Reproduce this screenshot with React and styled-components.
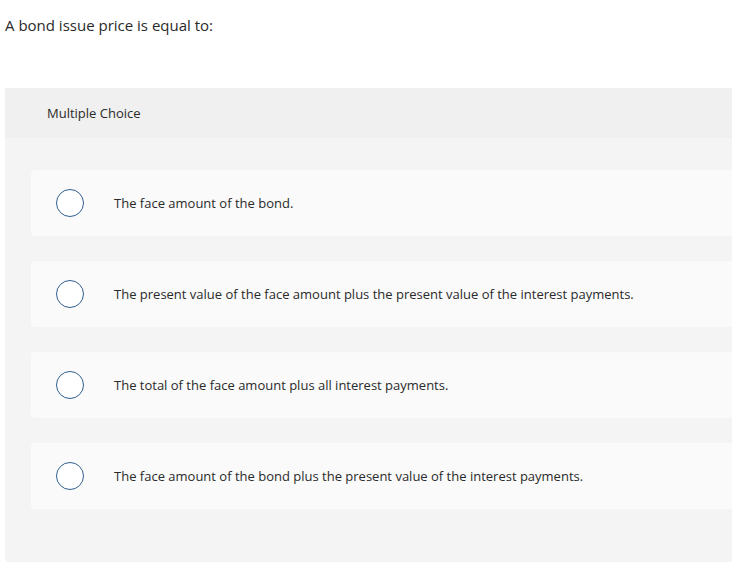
import React from "react";
import styled, { createGlobalStyle } from "styled-components";

const Global = createGlobalStyle`
  html, body { margin: 0; padding: 0; background: #fff; overflow: hidden; }
  body { font-family: "Open Sans", "Liberation Sans", sans-serif; color: #2d2d2d; }
`;

const Page = styled.div`
  padding-left: 5px;
  width: 760px;
`;

const Question = styled.p`
  margin: 0;
  padding-top: 15px;
  font-size: 15px;
  line-height: 20px;
  color: #2a2a2a;
  height: 88px;
  box-sizing: border-box;
`;

const Panel = styled.section`
  background: #f4f4f4;
  border-radius: 0 0 0 4px;
  padding-bottom: 53px;
`;

const Header = styled.div`
  height: 50px;
  background: #f0f0f0;
  display: flex;
  align-items: center;
  padding-left: 42px;
  font-size: 13px;
  color: #2a2a2a;
`;

const List = styled.div`
  display: flex;
  flex-direction: column;
  gap: 25px;
  padding: 32px 0 0 26px;
`;

const Option = styled.label`
  height: 66px;
  background: #fafafa;
  border-radius: 4px;
  display: flex;
  align-items: center;
  padding-left: 25px;
  gap: 30px;
  font-size: 13px;
  color: #2a2a2a;
  cursor: pointer;
`;

const Radio = styled.span`
  width: 28px;
  height: 28px;
  box-sizing: border-box;
  border: 1.5px solid #2f5f90;
  border-radius: 50%;
  background: #fff;
  flex-shrink: 0;
`;

const options = [
  "The face amount of the bond.",
  "The present value of the face amount plus the present value of the interest payments.",
  "The total of the face amount plus all interest payments.",
  "The face amount of the bond plus the present value of the interest payments.",
];

export default function App() {
  return (
    <Page>
      <Global />
      <Question>A bond issue price is equal to:</Question>
      <Panel>
        <Header>Multiple Choice</Header>
        <List>
          {options.map((o) => (
            <Option key={o}>
              <Radio />
              <span>{o}</span>
            </Option>
          ))}
        </List>
      </Panel>
    </Page>
  );
}
